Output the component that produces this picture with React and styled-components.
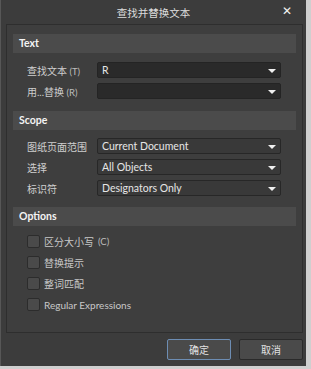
import styled, { createGlobalStyle } from "styled-components";

const Global = createGlobalStyle`
  html, body {
    margin: 0;
    padding: 0;
    background: #cfcfcf;
  }
  body {
    font-family: Lato, "Noto Sans CJK SC", sans-serif;
  }
`;

const Dialog = styled.div`
  width: 306px;
  height: 366px;
  background: #3c3c3c;
  border-left: 1px solid #575757;
  box-sizing: border-box;
  display: flex;
  flex-direction: column;
`;

const TitleBar = styled.div`
  height: 24px;
  position: relative;
  display: flex;
  align-items: center;
  justify-content: center;
  color: #dcdcdc;
  font-size: 10.5px;
`;

const Close = styled.span`
  position: absolute;
  right: 14px;
  top: 4px;
  color: #f2f2f2;
  font-size: 12px;
  font-weight: bold;
  font-family: "DejaVu Sans", sans-serif;
`;

const Panel = styled.div`
  margin-left: 5px;
  width: 297px;
  height: 309px;
  box-sizing: border-box;
  border: 1px solid #2e2e2e;
  background: #3e3e3e;
  padding: 9px 6px 0 6px;
`;

const Header = styled.div`
  height: 19px;
  background: #4b4b4b;
  color: #f4f4f4;
  font-weight: bold;
  font-size: 10.5px;
  line-height: 19px;
  padding-left: 6px;
  margin-bottom: ${(p) => p.$after}px;
`;

const Rows = styled.div`
  display: flex;
  flex-direction: column;
  gap: ${(p) => p.$gap}px;
  margin-bottom: ${(p) => p.$after}px;
`;

const Row = styled.div`
  display: grid;
  grid-template-columns: 70px 184px;
  align-items: center;
  padding-left: 14px;
  height: 16px;
`;

const Label = styled.span`
  color: #cfcfcf;
  font-size: 10px;
  white-space: nowrap;
`;

const Hint = styled.span`
  font-size: 9.5px;
  color: #bdbdbd;
`;

const Select = styled.div`
  height: 16px;
  box-sizing: border-box;
  border: 1px solid ${(p) => (p.$dark ? "#242424" : "#272727")};
  background: ${(p) => (p.$dark ? "#2a2a2a" : "#393939")};
  border-radius: 2px;
  display: flex;
  align-items: center;
  justify-content: space-between;
  padding: 0 4px 0 4px;
  color: #e6e6e6;
  font-size: 10.5px;
`;

const Arrow = styled.span`
  width: 0;
  height: 0;
  border-left: 4px solid transparent;
  border-right: 4px solid transparent;
  border-top: 4px solid #f0f0f0;
  margin-top: 1px;
`;

const Check = styled.label`
  display: flex;
  align-items: center;
  gap: 4px;
  padding-left: 14px;
  height: 13px;
  color: #c8c8c8;
  font-size: 10px;
  white-space: nowrap;
`;

const Box = styled.span`
  width: 13px;
  height: 13px;
  box-sizing: border-box;
  background: #4a4a4a;
  border: 1px solid #2c2c2c;
  border-radius: 2px;
`;

const Footer = styled.div`
  display: flex;
  justify-content: flex-end;
  gap: 8px;
  padding: 6px 3px 0 0;
`;

const Button = styled.button`
  width: 64px;
  height: 21px;
  box-sizing: border-box;
  border-radius: 2px;
  border: 1px solid ${(p) => (p.$primary ? "#6d8db3" : "#2a2a2a")};
  background: #4a4a4a;
  color: #e2e2e2;
  font-family: "Noto Sans CJK SC", sans-serif;
  font-size: 10px;
  padding: 0;
`;

function Field({ label, hint, value, dark }) {
  return (
    <Row>
      <Label>
        {label}
        {hint && <Hint> {hint}</Hint>}
      </Label>
      <Select $dark={dark}>
        <span>{value}</span>
        <Arrow />
      </Select>
    </Row>
  );
}

export default function App() {
  return (
    <>
      <Global />
      <Dialog>
        <TitleBar>
          查找并替换文本
          <Close>✕</Close>
        </TitleBar>
        <Panel>
          <Header $after={9}>Text</Header>
          <Rows $gap={5} $after={12}>
            <Field label="查找文本" hint="(T)" value="R" dark />
            <Field label="用...替换" hint="(R)" value="" dark />
          </Rows>
          <Header $after={8}>Scope</Header>
          <Rows $gap={5} $after={11}>
            <Field label="图纸页面范围" value="Current Document" />
            <Field label="选择" value="All Objects" />
            <Field label="标识符" value="Designators Only" />
          </Rows>
          <Header $after={9}>Options</Header>
          <Rows $gap={8} $after={0}>
            <Check>
              <Box />
              区分大小写 <Hint>(C)</Hint>
            </Check>
            <Check>
              <Box />
              替换提示
            </Check>
            <Check>
              <Box />
              整词匹配
            </Check>
            <Check>
              <Box />
              Regular Expressions
            </Check>
          </Rows>
        </Panel>
        <Footer>
          <Button $primary>确定</Button>
          <Button>取消</Button>
        </Footer>
      </Dialog>
    </>
  );
}
